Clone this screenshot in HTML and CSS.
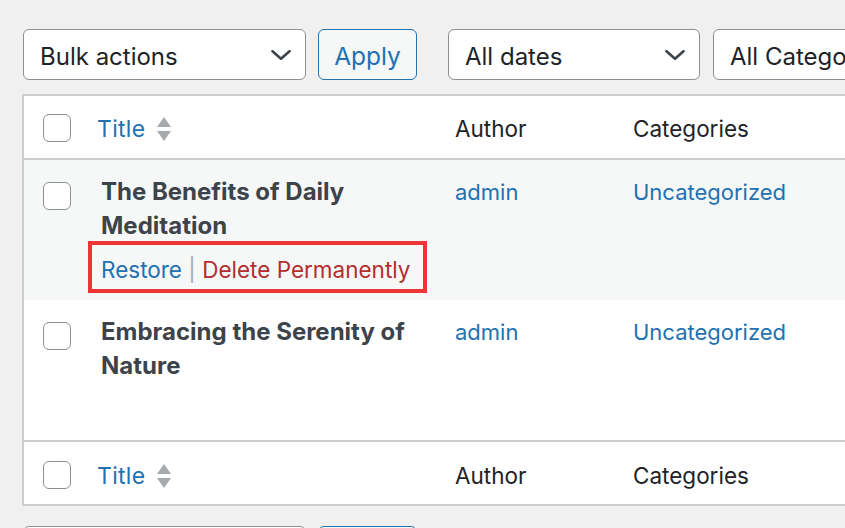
FILE: index.html
```html
<!DOCTYPE html>
<html>
<head>
<meta charset="utf-8">
<link rel="stylesheet" href="styles.css">
</head>
<body>
<div class="tablenav">
  <div class="select w-bulk"><span>Bulk actions</span><svg class="chev" viewBox="0 0 20 10" width="20" height="10"><path d="M1.5 1.2 L10 8.8 L18.5 1.2" fill="none" stroke="#3c434a" stroke-width="2.6" stroke-linecap="round" stroke-linejoin="round"/></svg></div>
  <button class="btn">Apply</button>
  <div class="select w-dates"><span>All dates</span><svg class="chev" viewBox="0 0 20 10" width="20" height="10"><path d="M1.5 1.2 L10 8.8 L18.5 1.2" fill="none" stroke="#3c434a" stroke-width="2.6" stroke-linecap="round" stroke-linejoin="round"/></svg></div>
  <div class="select w-cats"><span>All Categories</span><svg class="chev" viewBox="0 0 20 10" width="20" height="10"><path d="M1.5 1.2 L10 8.8 L18.5 1.2" fill="none" stroke="#3c434a" stroke-width="2.6" stroke-linecap="round" stroke-linejoin="round"/></svg></div>
</div>

<div class="table">
  <div class="row head">
    <div class="cb"><span class="box"></span></div>
    <div class="col-title"><a class="link">Title</a><span class="sort"><span class="up"></span><span class="down"></span></span></div>
    <div class="col-author">Author</div>
    <div class="col-cat">Categories</div>
  </div>
  <div class="row item alt">
    <div class="cb"><span class="box"></span></div>
    <div class="col-title">
      <strong class="row-title">The Benefits of Daily<br>Meditation</strong>
      <div class="row-actions"><a class="link">Restore</a><span class="sep"> | </span><a class="delete">Delete Permanently</a></div>
    </div>
    <div class="col-author"><a class="link">admin</a></div>
    <div class="col-cat"><a class="link">Uncategorized</a></div>
  </div>
  <div class="row item">
    <div class="cb"><span class="box"></span></div>
    <div class="col-title">
      <strong class="row-title">Embracing the Serenity of<br>Nature</strong>
      <div class="row-actions hidden"><a class="link">Restore</a><span class="sep"> | </span><a class="delete">Delete Permanently</a></div>
    </div>
    <div class="col-author"><a class="link">admin</a></div>
    <div class="col-cat"><a class="link">Uncategorized</a></div>
  </div>
  <div class="row head foot">
    <div class="cb"><span class="box"></span></div>
    <div class="col-title"><a class="link">Title</a><span class="sort"><span class="up"></span><span class="down"></span></span></div>
    <div class="col-author">Author</div>
    <div class="col-cat">Categories</div>
  </div>
</div>

<div class="tablenav bottom">
  <div class="select w-bulk"></div>
  <div class="btn"></div>
</div>
</body>
</html>
```
FILE: styles.css
```css
html, body {
  margin: 0;
  padding: 0;
  background: #f0f0f1;
  overflow: hidden;
  font-family: Inter, "Liberation Sans", sans-serif;
}

.tablenav {
  display: flex;
  align-items: center;
  margin: 29px 0 0 23px;
  height: 51px;
}

.tablenav.bottom {
  margin-top: 20px;
}

.select {
  box-sizing: border-box;
  flex-shrink: 0;
  height: 51px;
  border: 1.5px solid #8c8f94;
  border-radius: 6px;
  background: #fff;
  display: flex;
  align-items: center;
  justify-content: space-between;
  padding: 3px 14px 0 16px;
  font-size: 24px;
  color: #1d2327;
}

.chev {
  display: block;
  margin-top: -2px;
}

.w-bulk { width: 283px; }
.w-dates { width: 252px; margin-left: 31px; }
.w-cats { width: 270px; margin-left: 13px; }

.btn {
  box-sizing: border-box;
  flex-shrink: 0;
  margin-left: 12px;
  width: 99px;
  height: 51px;
  border: 1.5px solid #2271b1;
  border-radius: 6px;
  background: #f6f7f7;
  color: #2271b1;
  font-family: inherit;
  font-size: 24.5px;
  padding: 3px 0 0;
}

.table {
  margin: 14px 0 0 22px;
  width: 1000px;
  border: 2px solid #cdced0;
  background: #fff;
}

.row {
  display: grid;
  grid-template-columns: 73px 358px 178px 1fr;
  font-size: 22px;
  line-height: 34px;
}

.head {
  height: 62px;
  align-items: center;
  color: #1d2327;
  border-bottom: 2px solid #cdced0;
}

.head .col-title,
.head .col-author,
.head .col-cat {
  padding-top: 3px;
}

.head .col-author,
.head .col-cat {
  font-size: 22.5px;
}

.foot {
  border-bottom: none;
}

.foot .col-title,
.foot .col-author,
.foot .col-cat {
  padding-top: 5px;
}

.foot .box { margin-top: 4px; }

.cb {
  padding-left: 19px;
}

.box {
  display: block;
  box-sizing: border-box;
  width: 28px;
  height: 28px;
  border: 1.5px solid #8c8f94;
  border-radius: 6px;
  background: #fff;
}

.head .box { margin-top: 2px; }
.foot .box { margin-top: 4px; }

.col-title {
  display: flex;
  flex-direction: column;
  align-items: flex-start;
}

.head .col-title {
  flex-direction: row;
  align-items: center;
}

.head .col-title .link {
  font-size: 23px;
  letter-spacing: 0.3px;
}

.link {
  color: #2271b1;
  text-decoration: none;
}

.sort {
  display: flex;
  flex-direction: column;
  gap: 4px;
  margin-left: 12px;
}

.up, .down {
  display: block;
  width: 0;
  height: 0;
  border-left: 7px solid transparent;
  border-right: 7px solid transparent;
}

.up { border-bottom: 10px solid #a7aaad; }
.down { border-top: 10px solid #a7aaad; }

.item {
  padding: 15px 0 7px;
  align-items: start;
}

.item .cb {
  padding-top: 7px;
}

.alt {
  background: #f6f7f7;
}

.item + .item {
  border-bottom: 2px solid #cdced0;
}

.row-title {
  display: block;
  padding-left: 4px;
  font-size: 24px;
  font-weight: 700;
  color: #3c434a;
}

.row-actions {
  margin: -2px 0 0 -9px;
  border: 4px solid #ee3434;
  padding: 5px 13px 0 9px;
  line-height: 39px;
  font-size: 22.5px;
}

.row-actions.hidden {
  visibility: hidden;
}

.sep {
  color: #a7aaad;
}

.delete {
  color: #b32d2e;
}
```
